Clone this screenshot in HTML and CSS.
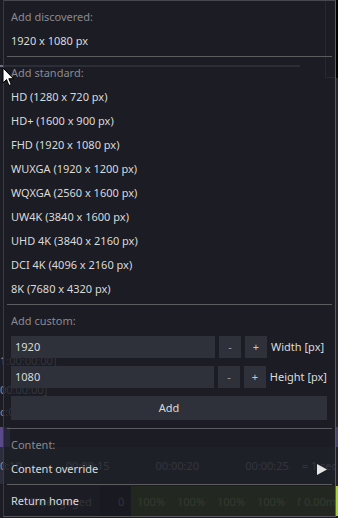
FILE: index.html
```html
<!DOCTYPE html>
<html>
<head>
<meta charset="utf-8">
<link rel="stylesheet" href="styles.css">
</head>
<body>
<div class="app">
  <div class="app-main">
    <div class="bg-top">
      <div class="bg-top-left"><div class="bg-bar"></div></div>
      <div class="bg-box"></div>
    </div>
    <div class="bg-space1"></div>
    <div class="bg-line">1:00:00:00]</div>
    <div class="bg-space2"></div>
    <div class="bg-line">00:00:00]</div>
    <div class="bg-space3"></div>
    <div class="bg-line">c:00:00</div>
    <div class="bg-space3"></div>
    <div class="bg-purple-row"><div class="bg-purple"></div></div>
    <div class="bg-timeline">
      <span class="t t0">0:10</span>
      <span class="tick tk1"></span><span class="t tt">00:00:15</span>
      <span class="tick tk2"></span><span class="t tt">00:00:20</span>
      <span class="tick tk2"></span><span class="t tt">00:00:25</span>
      <span class="vline"></span><span class="t tsec">= 1 sec</span>
    </div>
    <div class="bg-space4"></div>
    <div class="bg-green-row">
      <div class="bg-dark"><span class="g g-dis">Disengaged</span><span class="g g-zero">0</span></div>
      <div class="bg-green">
        <span class="g">100%</span><span class="g">100%</span><span class="g">100%</span><span class="g">100%</span><span class="g g-f">f</span><span class="g g-ms">0.00ms</span>
      </div>
    </div>
  </div>
  <div class="strip">
    <div class="s-black"></div>
    <div class="s-grey"></div>
    <div class="s-purple"></div>
    <div class="s-dark"></div>
    <div class="s-lime"></div>
  </div>
</div>

<div class="popup">
  <div class="item header">Add discovered:</div>
  <div class="item">1920 x 1080 px</div>
  <div class="sep"></div>
  <div class="item header">Add standard:</div>
  <div class="item">HD (1280 x 720 px)</div>
  <div class="item">HD+ (1600 x 900 px)</div>
  <div class="item">FHD (1920 x 1080 px)</div>
  <div class="item">WUXGA (1920 x 1200 px)</div>
  <div class="item">WQXGA (2560 x 1600 px)</div>
  <div class="item">UW4K (3840 x 1600 px)</div>
  <div class="item">UHD 4K (3840 x 2160 px)</div>
  <div class="item">DCI 4K (4096 x 2160 px)</div>
  <div class="item">8K (7680 x 4320 px)</div>
  <div class="sep"></div>
  <div class="item header">Add custom:</div>
  <div class="custom">
    <div class="field-row">
      <div class="input">1920</div>
      <div class="step minus">-</div>
      <div class="step plus">+</div>
      <div class="label">Width [px]</div>
    </div>
    <div class="field-row">
      <div class="input">1080</div>
      <div class="step minus">-</div>
      <div class="step plus">+</div>
      <div class="label">Height [px]</div>
    </div>
    <div class="add-btn">Add</div>
  </div>
  <div class="sep"></div>
  <div class="item header">Content:</div>
  <div class="item submenu">
    <span>Content override</span>
    <svg class="arrow" width="10" height="11" viewBox="0 0 10 11"><path d="M0 0 L10 5.5 L0 11 Z" fill="#e6e6e6"/></svg>
  </div>
  <div class="sep"></div>
  <div class="item">Return home</div>
</div>

<svg class="cursor" width="13" height="20" viewBox="0 0 13 20">
  <path d="M1 1 L1 16 L4.5 12.5 L7 18.5 L9.3 17.5 L6.8 11.7 L11.5 11.7 Z" fill="#ffffff" stroke="#000000" stroke-width="1" stroke-linejoin="round"/>
</svg>
</body>
</html>
```

FILE: styles.css
```css
html, body {
  margin: 0;
  padding: 0;
  width: 338px;
  height: 518px;
  overflow: hidden;
  background: #1c1d24;
}

body {
  position: relative;
  font-family: "Noto Sans", "DejaVu Sans", sans-serif;
  font-size: 11px;
}

/* ---------- background application (seen through the popup) ---------- */
.app {
  display: flex;
  width: 338px;
  height: 518px;
}

.app-main {
  width: 336px;
  display: flex;
  flex-direction: column;
}

.bg-top {
  display: flex;
  height: 78px;
}

.bg-top-left {
  flex: 1;
  padding-top: 65px;
}

.bg-bar {
  width: 300px;
  height: 2px;
  background: #6e7284;
}

.bg-box {
  width: 11px;
  box-sizing: border-box;
  border-left: 1px solid #5a5a5e;
  border-bottom: 1px solid #5a5a5e;
}

.bg-space1 { height: 276px; }
.bg-space2 { height: 15px; }
.bg-space3 { height: 8px; }
.bg-space4 { height: 2px; }

.bg-line {
  height: 14px;
  line-height: 14px;
  color: #8e929c;
  white-space: nowrap;
}

.bg-purple-row {
  height: 20px;
  display: flex;
}

.bg-purple {
  width: 10px;
  background: #5a4a8a;
}

.bg-timeline {
  height: 37px;
  background: #2c2d3a;
  display: flex;
  align-items: center;
  white-space: nowrap;
}

.t {
  color: #8c909c;
  line-height: 14px;
}

.t0 { width: 22px; }
.tt { width: 44px; }

.tick {
  width: 4px;
  height: 12px;
  background: #6a6b7c;
}

.tk1 { margin-left: 40px; margin-right: 4px; }
.tk2 { margin-left: 41px; margin-right: 5px; }

.vline {
  width: 1px;
  height: 30px;
  background: #5a5b6a;
  margin-left: 3px;
  margin-right: 10px;
}

.bg-green-row {
  height: 30px;
  display: flex;
  white-space: nowrap;
}

.bg-dark {
  width: 131px;
  display: flex;
  align-items: center;
  background: linear-gradient(to right, transparent 0 100px, #101014 100px);
}

.g {
  color: #8ea45c;
  width: 40px;
}

.g-dis {
  color: #80848e;
  margin-left: 30px;
  width: 88px;
}

.g-zero { width: 13px; color: #80848e; }

.bg-green {
  flex: 1;
  display: flex;
  align-items: center;
  background: #3c5810;
  padding-left: 6px;
}

.g-f { width: 7px; }
.g-ms { width: 40px; }

.strip {
  width: 2px;
  display: flex;
  flex-direction: column;
}

.s-black { height: 78px; background: #000; }
.s-grey { height: 349px; background: #26262a; }
.s-purple { height: 20px; background: #4b3f6e; }
.s-dark { height: 39px; background: #222226; }
.s-lime { height: 30px; background: #a6d42a; }

/* ---------- popup menu ---------- */
.popup {
  position: absolute;
  left: 3px;
  top: 0;
  width: 333px;
  height: 517px;
  box-sizing: border-box;
  border: 1px solid #474750;
  border-left-color: #3a3a42;
  border-right-color: #5c5c62;
  border-bottom-color: #55555a;
  background: rgba(28, 29, 36, 0.8);
  padding: 4px 8px 0 7px;
  color: #dadada;
  display: flex;
  flex-direction: column;
}

.item {
  height: 24px;
  line-height: 24px;
  white-space: nowrap;
}

.header {
  color: #8a8a8e;
}

.sep {
  height: 1px;
  background: #5c5c60;
  margin: 3px -5px 4px -4px;
}

.custom {
  display: flex;
  flex-direction: column;
  gap: 8px;
  margin: 3px 0 5px;
}

.field-row {
  display: flex;
  gap: 4px;
  height: 22px;
  line-height: 22px;
}

.input {
  width: 200px;
  padding-left: 4px;
  background: #2e3139;
  color: #dadada;
}

.step {
  width: 22px;
  text-align: center;
  background: #2e3139;
}

.minus { color: #9a9ca2; }
.plus { color: #c8c8cc; }

.label {
  white-space: nowrap;
  color: #dcdcdc;
}

.add-btn {
  height: 24px;
  line-height: 24px;
  text-align: center;
  background: #2e3139;
  color: #dadada;
}

.submenu {
  display: flex;
  justify-content: space-between;
  align-items: center;
}

.arrow {
  display: block;
  margin-top: 1px;
}

.cursor {
  position: absolute;
  left: 2px;
  top: 67px;
}
```
